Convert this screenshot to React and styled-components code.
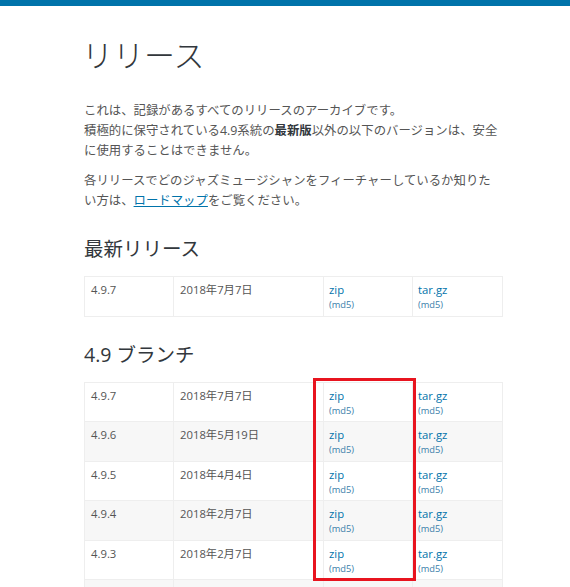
import React from 'react'
import styled, { createGlobalStyle } from 'styled-components'

const GlobalStyle = createGlobalStyle`
  body {
    margin: 0;
    background: #fff;
    font-family: 'Open Sans', 'Noto Sans CJK JP', sans-serif;
    color: #555;
  }
`

const latest = [{ version: '4.9.7', date: '2018年7月7日' }]

const branch = [
  { version: '4.9.7', date: '2018年7月7日' },
  { version: '4.9.6', date: '2018年5月19日' },
  { version: '4.9.5', date: '2018年4月4日' },
  { version: '4.9.4', date: '2018年2月7日' },
  { version: '4.9.3', date: '2018年2月7日' },
  { version: '4.9.2', date: '2018年1月16日' },
]

function ReleaseTable({ rows, highlight }) {
  return (
    <TableWrap>
      <Table>
        <colgroup>
          <col style={{ width: 89 }} />
          <col style={{ width: 150 }} />
          <col style={{ width: 89 }} />
          <col style={{ width: 90 }} />
        </colgroup>
        <tbody>
          {rows.map((r, i) => (
            <Row key={r.version + i} $odd={i % 2 === 1}>
              <Cell $pl={6}>{r.version}</Cell>
              <Cell $pl={6}>{r.date}</Cell>
              <Cell $pl={5}>
                <FileLink href="#">zip</FileLink>
                <Md5 href="#">(md5)</Md5>
              </Cell>
              <Cell $pl={5}>
                <FileLink href="#">tar.gz</FileLink>
                <Md5 href="#">(md5)</Md5>
              </Cell>
            </Row>
          ))}
        </tbody>
      </Table>
      {highlight && <Highlight />}
    </TableWrap>
  )
}

function App() {
  return (
    <>
      <GlobalStyle />
      <TopBar />
      <Main>
        <Title>リリース</Title>
        <Text>
          これは、記録があるすべてのリリースのアーカイブです。
          <br />
          積極的に保守されている4.9系統の<strong>最新版</strong>
          以外の以下のバージョンは、安全に使用することはできません。
        </Text>
        <Text>
          各リリースでどのジャズミュージシャンをフィーチャーしているか知りたい方は、
          <TextLink href="#">ロードマップ</TextLink>をご覧ください。
        </Text>
        <Heading>最新リリース</Heading>
        <ReleaseTable rows={latest} />
        <Heading>4.9 ブランチ</Heading>
        <ReleaseTable rows={branch} highlight />
      </Main>
    </>
  )
}

export default App

const TopBar = styled.div`
  height: 6px;
  background: #0073aa;
`

const Main = styled.main`
  width: 418px;
  padding: 0 0 40px 84px;
`

const Title = styled.h1`
  margin: 29px 0 26px -2px;
  font-size: 31px;
  line-height: 40px;
  font-weight: 300;
  color: #32373c;
`

const Text = styled.p`
  margin: 0 0 10px;
  font-size: 12.4px;
  line-height: 20px;
  color: #555;

  strong {
    color: #32373c;
    font-weight: 700;
  }
`

const TextLink = styled.a`
  color: #0073aa;
  text-decoration: underline;
`

const Heading = styled.h2`
  margin: 24px 0 13px;
  font-size: 19.5px;
  line-height: 28px;
  font-weight: 400;
  color: #32373c;
`

const TableWrap = styled.div`
  position: relative;
`

const Table = styled.table`
  width: 418px;
  border-collapse: collapse;
  table-layout: fixed;
  border: 1px solid #eee;
`

const Row = styled.tr`
  background: ${(p) => (p.$odd ? '#f7f7f7' : '#fff')};
`

const Cell = styled.td`
  height: 30px;
  padding: 5px 5px 3.5px ${(p) => p.$pl}px;
  border: 1px solid #eee;
  vertical-align: top;
  font-size: 11.3px;
  line-height: 16px;
  color: #555;
`

const FileLink = styled.a`
  display: block;
  color: #0073aa;
  text-decoration: none;
  font-size: 11.3px;
  line-height: 16px;
`

const Md5 = styled.a`
  display: block;
  color: #3a80aa;
  text-decoration: none;
  font-size: 9.3px;
  line-height: 14px;
`

const Highlight = styled.div`
  position: absolute;
  left: 229px;
  top: -4px;
  width: 97px;
  height: 197px;
  border: 3px solid #e8141f;
  pointer-events: none;
`
